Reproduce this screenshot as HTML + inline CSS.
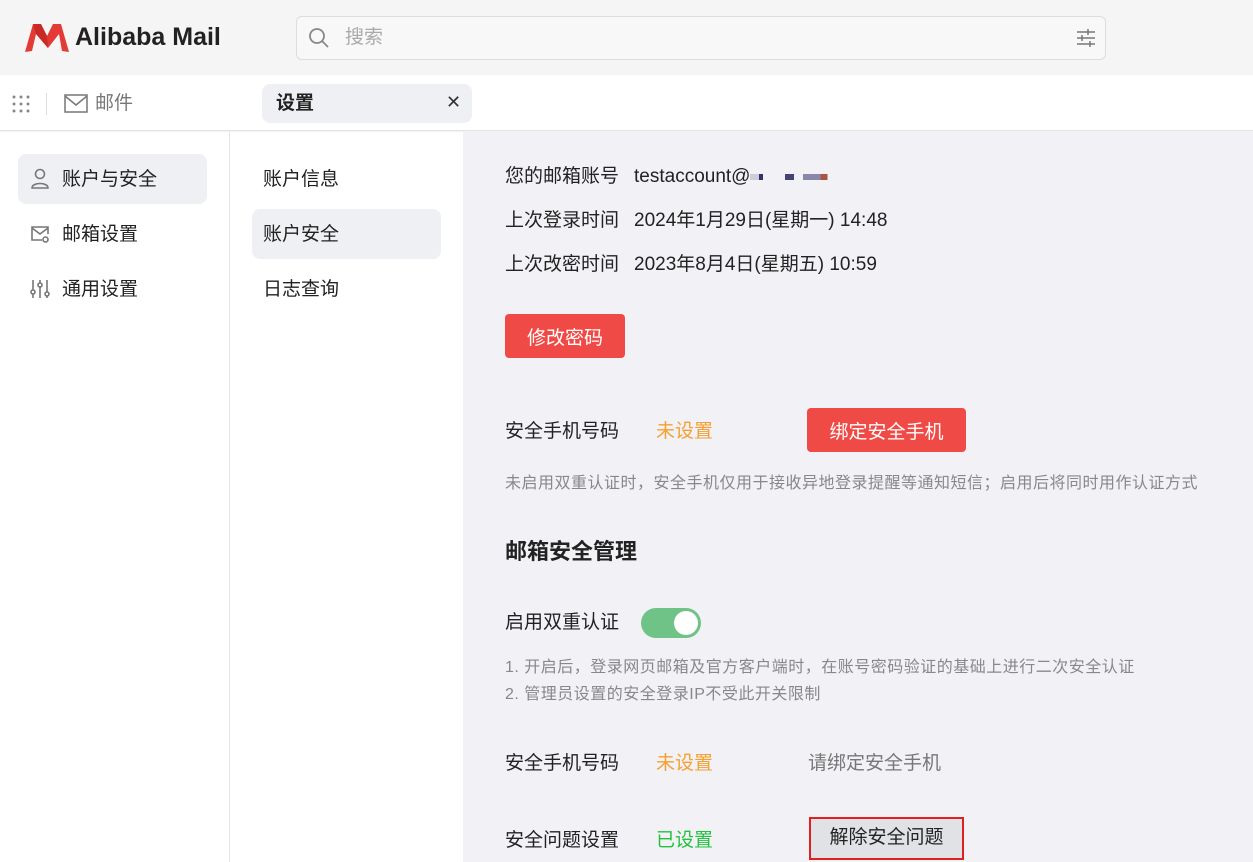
<!DOCTYPE html>
<html><head><meta charset="utf-8"><style>
*{margin:0;padding:0;box-sizing:border-box}
body{width:1253px;height:862px;overflow:hidden;position:relative;background:#f2f1f6;font-family:"Liberation Sans","Noto Sans CJK SC",sans-serif;color:#222;font-size:19px}
.a{position:absolute;white-space:nowrap;line-height:1.2}
.t{margin-top:3px}
.btn{position:absolute;background:#f04a46;color:#fff;border-radius:4px;font-size:19px;display:flex;align-items:center;justify-content:center}
.g{color:#888;font-size:16px;letter-spacing:.5px}
</style></head><body>
<div class="a" style="left:0;top:0;width:1253px;height:75px;background:#f5f5f5"></div>
<svg class="a" style="left:24px;top:23px" width="46" height="30" viewBox="0 0 46 30"><path d="M1 29 L9 1 L17 1 L23 13 L29 1 L37 1 L45 29 L38 28 L35 11 L24 25 L12 11 L8 28 Z" fill="#e33a36"/><path d="M9 1 L17 1 L23 13 L24 25 L12 11Z" fill="#c92a28"/></svg>
<div class="a" style="left:75px;top:22px;font-size:25px;font-weight:bold;color:#222">Alibaba Mail</div>
<div class="a" style="left:296px;top:16px;width:810px;height:44px;background:#f8f8f8;border:1px solid #ddd;border-radius:6px"></div>
<svg class="a" style="left:308px;top:27px" width="22" height="22" viewBox="0 0 22 22"><circle cx="9" cy="9" r="7" fill="none" stroke="#888" stroke-width="1.8"/><path d="M14 14l6 6" stroke="#888" stroke-width="1.8"/></svg>
<div class="a t" style="left:345px;top:24px;color:#aaa;font-size:19px">搜索</div>
<svg class="a" style="left:1076px;top:29px" width="20" height="18" viewBox="0 0 20 18"><g stroke="#777" stroke-width="1.5"><path d="M1 3h18M1 9h18M1 15h18"/><path d="M12 0v6M6 6v6M14 12v6"/></g></svg>
<div class="a" style="left:0;top:75px;width:1253px;height:56px;background:#fff;border-bottom:1px solid #e3e3e3"></div>
<svg class="a" style="left:12px;top:95px" width="18" height="18" viewBox="0 0 18 18" fill="#888"><circle cx="2" cy="2" r="1.5"/><circle cx="9" cy="2" r="1.5"/><circle cx="16" cy="2" r="1.5"/><circle cx="2" cy="9" r="1.5"/><circle cx="9" cy="9" r="1.5"/><circle cx="16" cy="9" r="1.5"/><circle cx="2" cy="16" r="1.5"/><circle cx="9" cy="16" r="1.5"/><circle cx="16" cy="16" r="1.5"/></svg>
<div class="a" style="left:46px;top:93px;width:1px;height:22px;background:#ddd"></div>
<svg class="a" style="left:64px;top:94px" width="24" height="19" viewBox="0 0 24 19"><rect x="1" y="1" width="22" height="17" fill="none" stroke="#777" stroke-width="1.5"/><path d="M1 2l11 9 11-9" fill="none" stroke="#777" stroke-width="1.5"/></svg>
<div class="a t" style="left:95px;top:90px;color:#777;font-size:19px">邮件</div>
<div class="a" style="left:262px;top:84px;width:210px;height:39px;background:#eef0f3;border-radius:8px"></div>
<div class="a t" style="left:276px;top:90px;font-weight:bold;font-size:19px">设置</div>
<div class="a t" style="left:446px;top:89px;font-size:18px;color:#333">✕</div>
<div class="a" style="left:0;top:132px;width:229px;height:730px;background:#fff"></div>
<div class="a" style="left:229px;top:132px;width:1px;height:730px;background:#e6e6e6"></div>
<div class="a" style="left:230px;top:132px;width:233px;height:730px;background:#fff"></div>
<div class="a" style="left:18px;top:154px;width:189px;height:50px;background:#eef0f3;border-radius:8px"></div>
<svg class="a" style="left:30px;top:168px" width="20" height="22" viewBox="0 0 20 22"><circle cx="10" cy="6" r="4.5" fill="none" stroke="#777" stroke-width="1.6"/><path d="M2 20c0-6 16-6 16 0z" fill="none" stroke="#777" stroke-width="1.6"/></svg>
<div class="a t" style="left:62px;top:166px;font-size:19px">账户与安全</div>
<svg class="a" style="left:30px;top:224px" width="20" height="20" viewBox="0 0 20 20"><path d="M12 16H2V3h16v7" fill="none" stroke="#777" stroke-width="1.6"/><path d="M2 4l8 6 8-6" fill="none" stroke="#777" stroke-width="1.6"/><circle cx="15.5" cy="15.5" r="2.5" fill="none" stroke="#777" stroke-width="1.6"/></svg>
<div class="a t" style="left:62px;top:221px;font-size:19px">邮箱设置</div>
<svg class="a" style="left:30px;top:279px" width="20" height="20" viewBox="0 0 20 20"><g stroke="#777" stroke-width="1.6" fill="none"><path d="M3 1v18M10 1v18M17 1v18"/><circle cx="3" cy="13" r="2" fill="#fff"/><circle cx="10" cy="6" r="2" fill="#fff"/><circle cx="17" cy="15" r="2" fill="#fff"/></g></svg>
<div class="a t" style="left:62px;top:276px;font-size:19px">通用设置</div>
<div class="a t" style="left:263px;top:166px;font-size:19px">账户信息</div>
<div class="a" style="left:252px;top:209px;width:189px;height:50px;background:#eef0f3;border-radius:8px"></div>
<div class="a t" style="left:263px;top:221px;font-size:19px">账户安全</div>
<div class="a t" style="left:263px;top:276px;font-size:19px">日志查询</div>
<div class="a t" style="left:505px;top:163px">您的邮箱账号</div>
<div class="a t" style="left:634px;top:163px">testaccount@<span style="display:inline-block;width:88px;height:6px;vertical-align:middle;background:linear-gradient(90deg,#ccd 0 10%,#336 10% 15%,transparent 15% 40%,#447 40% 50%,transparent 50% 60%,#88a 60% 80%,#a54 80% 88%,transparent 88%)"></span></div>
<div class="a t" style="left:505px;top:207px">上次登录时间</div>
<div class="a t" style="left:634px;top:207px">2024年1月29日(星期一) 14:48</div>
<div class="a t" style="left:505px;top:251px">上次改密时间</div>
<div class="a t" style="left:634px;top:251px">2023年8月4日(星期五) 10:59</div>
<div class="btn" style="left:505px;top:314px;width:120px;height:44px">修改密码</div>
<div class="a t" style="left:505px;top:418px">安全手机号码</div>
<div class="a t" style="left:656px;top:418px;color:#f5a030">未设置</div>
<div class="btn" style="left:807px;top:408px;width:159px;height:44px">绑定安全手机</div>
<div class="a g t" style="left:505px;top:471px">未启用双重认证时，安全手机仅用于接收异地登录提醒等通知短信；启用后将同时用作认证方式</div>
<div class="a t" style="left:505px;top:536px;font-size:22px;font-weight:bold">邮箱安全管理</div>
<div class="a t" style="left:505px;top:609px">启用双重认证</div>
<div class="a" style="left:641px;top:608px;width:60px;height:30px;background:#6fc386;border-radius:15px"></div>
<div class="a" style="left:674px;top:611px;width:24px;height:24px;background:#fff;border-radius:50%"></div>
<div class="a g t" style="left:505px;top:655px">1. 开启后，登录网页邮箱及官方客户端时，在账号密码验证的基础上进行二次安全认证</div>
<div class="a g t" style="left:505px;top:682px">2. 管理员设置的安全登录IP不受此开关限制</div>
<div class="a t" style="left:505px;top:750px">安全手机号码</div>
<div class="a t" style="left:656px;top:750px;color:#f5a030">未设置</div>
<div class="a t" style="left:808px;top:750px;color:#777">请绑定安全手机</div>
<div class="a t" style="left:505px;top:827px">安全问题设置</div>
<div class="a t" style="left:656px;top:827px;color:#22c33c">已设置</div>
<div class="a" style="left:809px;top:817px;width:155px;height:43px;background:#e1e2e6;border:2px solid #e02020;display:flex;align-items:center;justify-content:center">解除安全问题</div>
</body></html>
